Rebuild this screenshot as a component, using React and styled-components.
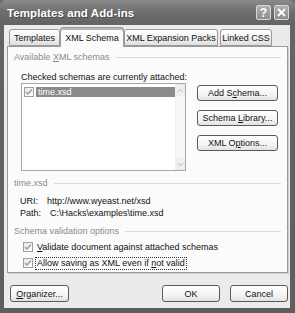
import React from "react";
import styled, { createGlobalStyle } from "styled-components";

const Global = createGlobalStyle`
  html, body { margin: 0; padding: 0; background: #6a6a6a; }
  body { font-family: "Liberation Sans", Arial, sans-serif; }
`;

const Window = styled.div`
  width: 295px;
  height: 313px;
  box-sizing: border-box;
  display: flex;
  flex-direction: column;
  background: linear-gradient(180deg, #8a8a8a 0%, #6e6e6e 12px, #646464 24px, #5e5e5e 100%);
  border-radius: 6px 6px 0 0;
  padding: 0 5px 5px 4px;
  overflow: hidden;
`;

const TitleBar = styled.div`
  height: 25px;
  flex: none;
  display: flex;
  align-items: center;
  padding-left: 3px;
  padding-right: 1px;
`;

const Title = styled.div`
  flex: 1;
  color: #ffffff;
  font-family: "Liberation Sans", Arial, sans-serif;
  font-weight: bold;
  font-size: 11.5px;
  letter-spacing: 0.1px;
  text-shadow: 1px 1px 0 #4a4a4a;
`;

const CaptionButtons = styled.div`
  display: flex;
  gap: 3px;
`;

const CaptionButton = styled.div`
  width: 15px;
  height: 15px;
  box-sizing: border-box;
  border: 1px solid #d8d8d8;
  border-radius: 2px;
  background: linear-gradient(180deg, #b0b0b0, #8c8c8c);
  display: flex;
  align-items: center;
  justify-content: center;
  color: #fff;
  font-family: "Liberation Sans", Arial, sans-serif;
  font-weight: bold;
  font-size: 12px;
  line-height: 1;
`;

const Body = styled.div`
  flex: 1;
  background: #ebebeb;
  display: flex;
  flex-direction: column;
  padding: 2px 2px 0 3px;
  font-size: 9px;
  color: #111;
`;

const TabRow = styled.div`
  display: flex;
  align-items: flex-end;
  height: 19px;
  padding-left: 2px;
  position: relative;
  z-index: 1;
`;

const Tab = styled.div`
  box-sizing: border-box;
  width: ${(p) => p.$w}px;
  height: ${(p) => (p.$active ? "20px" : "17px")};
  margin-left: ${(p) => p.$ml || 0}px;
  margin-bottom: ${(p) => (p.$active ? "-1px" : "0")};
  border: 1px solid #9a9a9a;
  border-bottom: ${(p) => (p.$active ? "none" : "1px solid #9a9a9a")};
  border-radius: 3px 3px 0 0;
  background: ${(p) => (p.$active ? "#fbfbfb" : "linear-gradient(180deg, #ffffff, #ececec 70%, #dedede)")};
  box-shadow: ${(p) => (p.$active ? "inset 0 2px 0 #b8b8b8" : "none")};
  display: flex;
  align-items: center;
  justify-content: center;
  font-size: 9px;
  white-space: nowrap;
`;

const Panel = styled.div`
  box-sizing: border-box;
  height: 227px;
  background: #fbfbfb;
  border: 1px solid #9a9a9a;
  box-shadow: 1px 1px 0 #d0d0d0;
  padding: 4px 6px 0 6px;
  display: flex;
  flex-direction: column;
`;

const GroupHeader = styled.div`
  display: flex;
  align-items: center;
  gap: 6px;
  color: #8a8a8a;
  height: 12px;
  margin-top: ${(p) => p.$mt || 0}px;
  & > span { white-space: nowrap; }
  &::after {
    content: "";
    flex: 1;
    height: 1px;
    background: #dcdcdc;
  }
`;

const U = styled.span`
  text-decoration: underline;
`;

const Indent = styled.div`
  padding-left: ${(p) => p.$pl || 7}px;
  margin-top: ${(p) => p.$mt || 0}px;
`;

const Caption = styled.div`
  height: 12px;
  line-height: 12px;
  white-space: nowrap;
`;

const SchemaRow = styled.div`
  display: flex;
  gap: 11px;
`;

const ListBox = styled.div`
  box-sizing: border-box;
  width: 165px;
  height: 88px;
  border: 1px solid #a8a8a8;
  background: #fff;
  display: flex;
`;

const ListItems = styled.div`
  flex: 1;
  padding: 3px 0 0 2px;
`;

const ListItem = styled.div`
  display: flex;
  align-items: center;
  height: 10px;
`;

const ItemLabel = styled.div`
  flex: 1;
  height: 10px;
  line-height: 10px;
  margin-left: 2px;
  padding-left: 2px;
  background: ${(p) => (p.$selected ? "#8a8a8a" : "transparent")};
  color: ${(p) => (p.$selected ? "#fff" : "#111")};
`;

const ScrollBar = styled.div`
  width: 9px;
  display: flex;
  flex-direction: column;
  justify-content: space-between;
  background: #f6f6f6;
  border-left: 1px solid #eeeeee;
`;

const ScrollArrow = styled.div`
  height: 10px;
  display: flex;
  align-items: center;
  justify-content: center;
  background: #f0f0f0;
  border: 1px solid #ececec;
`;

const ButtonColumn = styled.div`
  display: flex;
  flex-direction: column;
  gap: 9px;
  padding-top: 2px;
`;

const Button = styled.div`
  box-sizing: border-box;
  width: ${(p) => p.$w || 81}px;
  height: ${(p) => p.$h || 16}px;
  border: 1px solid #5a5a5a;
  border-radius: 3px;
  background: linear-gradient(180deg, #ffffff 0%, #f4f4f4 60%, #e2e2e2 100%);
  display: flex;
  align-items: center;
  justify-content: center;
  font-size: 9px;
  white-space: pre;
  color: #111;
`;

const InfoRow = styled.div`
  display: flex;
  height: 12px;
  line-height: 12px;
  white-space: nowrap;
`;

const InfoLabel = styled.span`
  margin-right: ${(p) => p.$gap || 10}px;
`;

const CheckRow = styled.div`
  display: flex;
  align-items: center;
  gap: 3px;
  height: 12px;
  margin-top: ${(p) => p.$mt || 0}px;
`;

const Box = styled.div`
  box-sizing: border-box;
  width: 10px;
  height: 10px;
  border: 1px solid #a0a0a0;
  background: linear-gradient(135deg, #e6e6e6, #ffffff);
  display: flex;
  align-items: center;
  justify-content: center;
  flex: none;
`;

const CheckLabel = styled.span`
  white-space: nowrap;
  padding: 0 1px;
  outline: ${(p) => (p.$focus ? "1px dotted #333" : "none")};
  line-height: 11px;
`;

const Footer = styled.div`
  display: flex;
  align-items: center;
  padding: 12px 0 0 3px;
  gap: 10px;
`;

const Spacer = styled.div`
  flex: 1;
`;

const Check = ({ color = "#9a9a9a" }) => (
  <svg width="8" height="8" viewBox="0 0 8 8">
    <path d="M1 4 L3 6 L7 1.5" fill="none" stroke={color} strokeWidth="1.4" />
  </svg>
);

export default function App() {
  return (
    <>
      <Global />
      <Window>
        <TitleBar>
          <Title>Templates and Add-ins</Title>
          <CaptionButtons>
            <CaptionButton>?</CaptionButton>
            <CaptionButton>
              <svg width="9" height="9" viewBox="0 0 9 9">
                <path d="M1 1 L8 8 M8 1 L1 8" stroke="#fff" strokeWidth="1.8" />
              </svg>
            </CaptionButton>
          </CaptionButtons>
        </TitleBar>
        <Body>
          <TabRow>
            <Tab $w={51}>Templates</Tab>
            <Tab $active $w={64}>XML Schema</Tab>
            <Tab $w={94}>XML Expansion Packs</Tab>
            <Tab $w={52} $ml={2}>Linked CSS</Tab>
          </TabRow>
          <Panel>
            <GroupHeader>
              <span>Available <U>X</U>ML schemas</span>
            </GroupHeader>
            <Indent $mt={8}>
              <Caption>Checked schemas are currently attached:</Caption>
              <SchemaRow>
                <ListBox>
                  <ListItems>
                    <ListItem>
                      <Box><Check /></Box>
                      <ItemLabel $selected>time.xsd</ItemLabel>
                    </ListItem>
                  </ListItems>
                  <ScrollBar>
                    <ScrollArrow>
                      <svg width="5" height="3" viewBox="0 0 5 3"><path d="M0 3 L2.5 0 L5 3" fill="none" stroke="#b8b8b8" /></svg>
                    </ScrollArrow>
                    <ScrollArrow>
                      <svg width="5" height="3" viewBox="0 0 5 3"><path d="M0 0 L2.5 3 L5 0" fill="none" stroke="#b8b8b8" /></svg>
                    </ScrollArrow>
                  </ScrollBar>
                </ListBox>
                <ButtonColumn>
                  <Button>Add S<U>c</U>hema...</Button>
                  <Button>Schema <U>L</U>ibrary...</Button>
                  <Button>XML O<U>p</U>tions...</Button>
                </ButtonColumn>
              </SchemaRow>
            </Indent>
            <GroupHeader $mt={6}>
              <span>time.xsd</span>
            </GroupHeader>
            <Indent $pl={6} $mt={6}>
              <InfoRow><InfoLabel $gap={9}>URI:</InfoLabel>http://www.wyeast.net/xsd</InfoRow>
              <InfoRow><InfoLabel $gap={9}>Path:</InfoLabel>C:\Hacks\examples\time.xsd</InfoRow>
            </Indent>
            <GroupHeader $mt={6}>
              <span>Schema validation options</span>
            </GroupHeader>
            <Indent $pl={9} $mt={4}>
              <CheckRow>
                <Box><Check /></Box>
                <CheckLabel><U>V</U>alidate document against attached schemas</CheckLabel>
              </CheckRow>
              <CheckRow $mt={4}>
                <Box><Check /></Box>
                <CheckLabel $focus>Allow saving as XML even if <U>n</U>ot valid</CheckLabel>
              </CheckRow>
            </Indent>
          </Panel>
          <Footer>
            <Button $w={59} $h={17}><U>O</U>rganizer...</Button>
            <Spacer />
            <Button $w={58} $h={17}>OK</Button>
            <Button $w={58} $h={17}>Cancel</Button>
          </Footer>
        </Body>
      </Window>
    </>
  );
}
